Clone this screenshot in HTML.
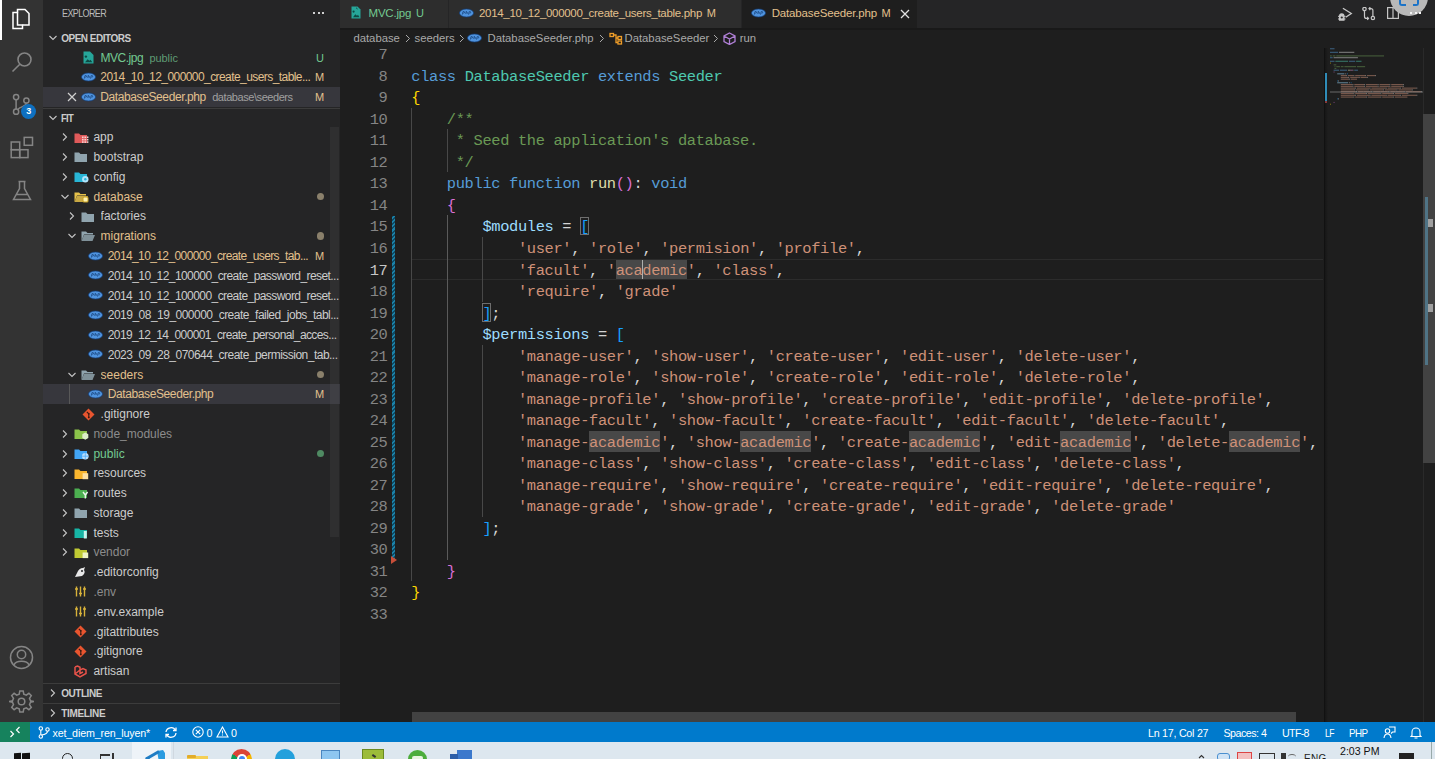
<!DOCTYPE html><html><head><meta charset="utf-8"><title>VS Code</title><style>
*{margin:0;padding:0;box-sizing:border-box}
html,body{width:1435px;height:759px;overflow:hidden;background:#1e1e1e;font-family:"Liberation Sans",sans-serif;position:relative}
.a{position:absolute}
.nw{white-space:pre}
#act{left:0;top:0;width:43px;height:722px;background:#333333}
#side{left:43px;top:0;width:297px;height:722px;background:#252526;overflow:hidden}
#tabs{left:340px;top:0;width:1095px;height:28px;background:#252526}
#crumbs{left:340px;top:28px;width:1095px;height:20px;background:#1e1e1e}
#ed{left:340px;top:48px;width:1095px;height:674px;background:#1e1e1e;overflow:hidden}
#status{left:0;top:722px;width:1435px;height:19.6px;background:#007acc;color:#fff;font-size:10.3px}
#taskbar{left:0;top:741.6px;width:1435px;height:17.4px;background:#dde7ef;overflow:hidden}
.row{position:absolute;left:0;width:297px;height:19.765px;font-size:12px;line-height:19.765px;color:#cccccc;white-space:pre}
.code{position:absolute;left:71.3px;height:21.52px;line-height:25.5px;font-family:"Liberation Mono",monospace;font-size:15.4px;letter-spacing:-0.35px;white-space:pre;color:#d4d4d4}
.ln{position:absolute;left:0;width:47.5px;text-align:right;height:21.52px;line-height:25.5px;font-family:"Liberation Mono",monospace;font-size:15.4px;letter-spacing:-0.35px;color:#858585}
.k{color:#569cd6}.c{color:#4ec9b0}.f{color:#dcdcaa}.cm{color:#6a9955}.s{color:#ce9178}.v{color:#9cdcfe}
.b1{color:#ffd700}.b2{color:#da70d6}.b3{color:#179fff}
.hl{}
</style></head><body><div id="act" class="a"><div class="a" style="left:0;top:0;width:2px;height:40px;background:#ffffff"></div><svg class="a" style="left:10px;top:7px" width="24" height="24" viewBox="0 0 24 24" fill="none" stroke="#ffffff" stroke-width="1.5"><path d="M7.5 5.5 V2.5 H15 L19 6.5 V18 H12.5"/><path d="M7.5 5.5 H3 V21.5 H12.5 V18 H7.5 Z" /></svg><svg class="a" style="left:10px;top:50px" width="24" height="24" viewBox="0 0 24 24" fill="none" stroke="#858585" stroke-width="1.6"><circle cx="14.5" cy="9.5" r="6.5"/><path d="M9.8 14.2 L2.5 21.5"/></svg><svg class="a" style="left:10px;top:93px" width="24" height="26" viewBox="0 0 24 26" fill="none" stroke="#858585" stroke-width="1.5"><circle cx="6.1" cy="4.1" r="2.6"/><circle cx="6.1" cy="18.7" r="2.6"/><circle cx="16.4" cy="7.5" r="2.6"/><path d="M6.1 6.7 V16.1 M16.4 10.1 C16.4 14 10 13 7.8 16.6"/></svg><div class="a" style="left:21.2px;top:104.2px;width:15px;height:15px;border-radius:50%;background:#0e70c0;color:#fff;font-size:9px;line-height:15px;text-align:center;font-weight:bold">3</div><svg class="a" style="left:9px;top:136px" width="26" height="24" viewBox="0 0 26 24" fill="none" stroke="#858585" stroke-width="1.5"><rect x="2.2" y="6" width="8.5" height="7.7"/><rect x="2.2" y="13.7" width="8.5" height="7.9"/><rect x="10.7" y="13.7" width="8.3" height="7.9"/><rect x="15.2" y="1.4" width="8.3" height="7.9"/></svg><svg class="a" style="left:10px;top:179px" width="24" height="24" viewBox="0 0 24 24" fill="none" stroke="#858585" stroke-width="1.5"><path d="M8.5 2.5 H15.5 M9.5 2.5 V9.5 L3.5 20.5 H20.5 L14.5 9.5 V2.5 M6 15.5 H18"/></svg><svg class="a" style="left:9px;top:645px" width="25" height="25" viewBox="0 0 25 25" fill="none" stroke="#858585" stroke-width="1.5"><circle cx="12.5" cy="12.5" r="11"/><circle cx="12.5" cy="9.5" r="4.2"/><path d="M5 20 C7 15 18 15 20 20"/></svg><svg class="a" style="left:9px;top:689px" width="25" height="25" viewBox="0 0 25 25" fill="none" stroke="#858585" stroke-width="1.5"><circle cx="12.5" cy="12.5" r="3.3"/><path d="M10.8 2 H14.2 L14.8 5.1 L17.3 6.1 L19.9 4.3 L22.3 6.7 L20.5 9.3 L21.5 11.8 L24.3 12.4 V12.6 L21.5 13.2 L20.5 15.7 L22.3 18.3 L19.9 20.7 L17.3 18.9 L14.8 19.9 L14.2 23 H10.8 L10.2 19.9 L7.7 18.9 L5.1 20.7 L2.7 18.3 L4.5 15.7 L3.5 13.2 L0.7 12.6 V12.4 L3.5 11.8 L4.5 9.3 L2.7 6.7 L5.1 4.3 L7.7 6.1 L10.2 5.1 Z"/></svg></div><div id="side" class="a"><div class="a nw" style="left:18.5px;top:6px;font-size:10.5px;line-height:14px;color:#bbbbbb;letter-spacing:-0.700px;transform:scaleX(0.8530);transform-origin:0 0;">EXPLORER</div><div class="a" style="left:270.1px;top:12px;width:2px;height:2px;background:#d0d0d0"></div><div class="a" style="left:274.6px;top:12px;width:2px;height:2px;background:#d0d0d0"></div><div class="a" style="left:279.2px;top:12px;width:2px;height:2px;background:#d0d0d0"></div><svg class="a" style="left:4.5px;top:32.7px" width="10" height="10" viewBox="0 0 10 10"><path d="M1.5 3 L5 6.5 L8.5 3" stroke="#c5c5c5" stroke-width="1.1" fill="none"/></svg><div class="a nw" style="left:18.200000000000003px;top:28.80px;height:19.765px;line-height:19.765px;font-size:10px;font-weight:bold;color:#cccccc;letter-spacing:-0.490px;">OPEN EDITORS</div><div class="a" style="left:0;top:87.10px;width:297px;height:19.765px;background:#37373d"></div><svg class="a" style="left:39.5px;top:51.2px" width="11" height="13" viewBox="0 0 11 13"><path d="M0.5 0.5 H7 L10.5 4 V12.5 H0.5 Z" fill="#26a69a"/><circle cx="2.9" cy="5.6" r="1.2" fill="#0d4a44"/><path d="M2 11.3 L4.6 8.2 L6.4 9.8 L7.5 8.8 L9.3 11.3 Z" fill="#0d4a44"/></svg><div class="a nw" style="left:57.4px;top:48.57px;height:19.765px;line-height:19.765px;font-size:12px;color:#73c991;letter-spacing:-0.469px;">MVC.jpg</div><div class="a nw" style="left:106.4px;top:48.57px;height:19.765px;line-height:19.765px;font-size:11px;color:#5f9c74;letter-spacing:-0.048px;">public</div><div class="a nw" style="left:273.0px;top:48.57px;height:19.765px;line-height:19.765px;font-size:11px;color:#73c991;font-weight:normal;">U</div><svg class="a" style="left:37.5px;top:71.8px" width="15" height="10" viewBox="0 0 15 10"><ellipse cx="7.5" cy="5" rx="7.1" ry="4.0" fill="#4f93de" stroke="#123e78" stroke-width="0.7"/><path d="M3.3 6.6 L4 3.6 H5.1 Q5.9 3.8 5.5 4.7 Q5.2 5.2 4.3 5.2 M6.7 5.9 L7.4 3 M7.1 4.2 Q8 3.8 8.4 4.5 L8.1 5.9 M9.5 6.6 L10.2 3.6 H11.3 Q12.1 3.8 11.7 4.7 Q11.4 5.2 10.5 5.2" stroke="#15427a" stroke-width="0.75" fill="none"/></svg><div class="a nw" style="left:57.3px;top:68.33px;height:19.765px;line-height:19.765px;font-size:12px;color:#e2c08d;letter-spacing:-0.571px;">2014_10_12_000000_create_users_table...</div><div class="a nw" style="left:272.0px;top:68.33px;height:19.765px;line-height:19.765px;font-size:11px;color:#e2c08d;font-weight:normal;">M</div><svg class="a" style="left:23.5px;top:92.1px" width="10" height="10" viewBox="0 0 10 10"><path d="M1 1 L9 9 M9 1 L1 9" stroke="#d0d0d0" stroke-width="1.2"/></svg><svg class="a" style="left:37.5px;top:91.6px" width="15" height="10" viewBox="0 0 15 10"><ellipse cx="7.5" cy="5" rx="7.1" ry="4.0" fill="#4f93de" stroke="#123e78" stroke-width="0.7"/><path d="M3.3 6.6 L4 3.6 H5.1 Q5.9 3.8 5.5 4.7 Q5.2 5.2 4.3 5.2 M6.7 5.9 L7.4 3 M7.1 4.2 Q8 3.8 8.4 4.5 L8.1 5.9 M9.5 6.6 L10.2 3.6 H11.3 Q12.1 3.8 11.7 4.7 Q11.4 5.2 10.5 5.2" stroke="#15427a" stroke-width="0.75" fill="none"/></svg><div class="a nw" style="left:57.3px;top:88.10px;height:19.765px;line-height:19.765px;font-size:12px;color:#e2c08d;letter-spacing:-0.398px;">DatabaseSeeder.php</div><div class="a nw" style="left:169.2px;top:88.10px;height:19.765px;line-height:19.765px;font-size:11px;color:#a0a0a0;letter-spacing:-0.437px;">database\seeders</div><div class="a nw" style="left:272.0px;top:88.10px;height:19.765px;line-height:19.765px;font-size:11px;color:#e2c08d;font-weight:normal;">M</div><div class="a" style="left:0;top:107.66px;width:297px;height:1px;background:#3c3c3c"></div><svg class="a" style="left:4.5px;top:112.6px" width="10" height="10" viewBox="0 0 10 10"><path d="M1.5 3 L5 6.5 L8.5 3" stroke="#c5c5c5" stroke-width="1.1" fill="none"/></svg><div class="a nw" style="left:18.200000000000003px;top:108.66px;height:19.765px;line-height:19.765px;font-size:10px;font-weight:bold;color:#cccccc;letter-spacing:-0.700px;transform:scaleX(0.9415);transform-origin:0 0;">FIT</div><svg class="a" style="left:16.5px;top:132.3px" width="10" height="10" viewBox="0 0 10 10"><path d="M3 1.5 L6.5 5 L3 8.5" stroke="#c5c5c5" stroke-width="1.1" fill="none"/></svg><svg class="a" style="left:30.9px;top:131.6px" width="15" height="12" viewBox="0 0 15 12"><path d="M0.5 1.5 H5 L6.5 3 H13 V11 H0.5 Z" fill="#e05a5a"/><g fill="#f7d0d0"><rect x="8" y="4.5" width="1.6" height="1.6"/><rect x="10.4" y="4.5" width="1.6" height="1.6"/><rect x="12.8" y="4.5" width="1.6" height="1.6"/><rect x="8" y="6.9" width="1.6" height="1.6"/><rect x="10.4" y="6.9" width="1.6" height="1.6"/><rect x="12.8" y="6.9" width="1.6" height="1.6"/><rect x="8" y="9.3" width="1.6" height="1.6"/><rect x="10.4" y="9.3" width="1.6" height="1.6"/><rect x="12.8" y="9.3" width="1.6" height="1.6"/></g></svg><div class="a nw" style="left:50.4px;top:128.43px;height:19.765px;line-height:19.765px;font-size:12px;color:#cccccc;width:245.6px;overflow:hidden;text-overflow:ellipsis;">app</div><svg class="a" style="left:16.5px;top:152.1px" width="10" height="10" viewBox="0 0 10 10"><path d="M3 1.5 L6.5 5 L3 8.5" stroke="#c5c5c5" stroke-width="1.1" fill="none"/></svg><svg class="a" style="left:30.9px;top:151.4px" width="15" height="12" viewBox="0 0 15 12"><path d="M0.5 1.5 H5 L6.5 3 H13 V11 H0.5 Z" fill="#90a4ae"/></svg><div class="a nw" style="left:50.4px;top:148.19px;height:19.765px;line-height:19.765px;font-size:12px;color:#cccccc;width:245.6px;overflow:hidden;text-overflow:ellipsis;">bootstrap</div><svg class="a" style="left:16.5px;top:171.9px" width="10" height="10" viewBox="0 0 10 10"><path d="M3 1.5 L6.5 5 L3 8.5" stroke="#c5c5c5" stroke-width="1.1" fill="none"/></svg><svg class="a" style="left:30.9px;top:171.2px" width="15" height="12" viewBox="0 0 15 12"><path d="M0.5 1.5 H5 L6.5 3 H13 V11 H0.5 Z" fill="#29b6d6"/><circle cx="11.3" cy="8.2" r="3.2" fill="#b3e5fc"/><circle cx="11.3" cy="8.2" r="1.2" fill="#29b6d6"/></svg><div class="a nw" style="left:50.4px;top:167.96px;height:19.765px;line-height:19.765px;font-size:12px;color:#cccccc;width:245.6px;overflow:hidden;text-overflow:ellipsis;">config</div><svg class="a" style="left:16.5px;top:191.6px" width="10" height="10" viewBox="0 0 10 10"><path d="M1.5 3 L5 6.5 L8.5 3" stroke="#c5c5c5" stroke-width="1.1" fill="none"/></svg><svg class="a" style="left:30.9px;top:190.9px" width="15" height="12" viewBox="0 0 15 12"><path d="M0.5 1.5 H5 L6.5 3 H12 V4.5 H3 L0.5 11 Z" fill="#e6c14a"/><path d="M3 5 H14 L11.5 11 H0.5 Z" fill="#e6c14a" opacity="0.85"/><rect x="8.5" y="5.5" width="6" height="6" rx="1.5" fill="#c9a227"/><rect x="9.5" y="6.5" width="4" height="4" rx="1" fill="#fff3b0"/></svg><div class="a nw" style="left:50.4px;top:187.72px;height:19.765px;line-height:19.765px;font-size:12px;color:#e2c08d;width:245.6px;overflow:hidden;text-overflow:ellipsis;">database</div><div class="a" style="left:273.8px;top:192.9px;width:7.4px;height:7.4px;border-radius:50%;background:#8a806b"></div><svg class="a" style="left:23.7px;top:211.4px" width="10" height="10" viewBox="0 0 10 10"><path d="M3 1.5 L6.5 5 L3 8.5" stroke="#c5c5c5" stroke-width="1.1" fill="none"/></svg><svg class="a" style="left:38.1px;top:210.7px" width="15" height="12" viewBox="0 0 15 12"><path d="M0.5 1.5 H5 L6.5 3 H13 V11 H0.5 Z" fill="#90a4ae"/></svg><div class="a nw" style="left:57.6px;top:207.48px;height:19.765px;line-height:19.765px;font-size:12px;color:#cccccc;width:238.4px;overflow:hidden;text-overflow:ellipsis;">factories</div><svg class="a" style="left:23.7px;top:231.2px" width="10" height="10" viewBox="0 0 10 10"><path d="M1.5 3 L5 6.5 L8.5 3" stroke="#c5c5c5" stroke-width="1.1" fill="none"/></svg><svg class="a" style="left:38.1px;top:230.4px" width="15" height="12" viewBox="0 0 15 12"><path d="M0.5 1.5 H5 L6.5 3 H12 V4.5 H3 L0.5 11 Z" fill="#90a4ae"/><path d="M3 5 H14 L11.5 11 H0.5 Z" fill="#90a4ae" opacity="0.85"/></svg><div class="a nw" style="left:57.6px;top:227.25px;height:19.765px;line-height:19.765px;font-size:12px;color:#e2c08d;width:238.4px;overflow:hidden;text-overflow:ellipsis;">migrations</div><div class="a" style="left:273.8px;top:232.4px;width:7.4px;height:7.4px;border-radius:50%;background:#8a806b"></div><svg class="a" style="left:44.8px;top:250.5px" width="15" height="10" viewBox="0 0 15 10"><ellipse cx="7.5" cy="5" rx="7.1" ry="4.0" fill="#4f93de" stroke="#123e78" stroke-width="0.7"/><path d="M3.3 6.6 L4 3.6 H5.1 Q5.9 3.8 5.5 4.7 Q5.2 5.2 4.3 5.2 M6.7 5.9 L7.4 3 M7.1 4.2 Q8 3.8 8.4 4.5 L8.1 5.9 M9.5 6.6 L10.2 3.6 H11.3 Q12.1 3.8 11.7 4.7 Q11.4 5.2 10.5 5.2" stroke="#15427a" stroke-width="0.75" fill="none"/></svg><div class="a nw" style="left:64.8px;top:247.02px;height:19.765px;line-height:19.765px;font-size:12px;color:#e2c08d;width:203.2px;overflow:hidden;text-overflow:ellipsis;letter-spacing:-0.610px;">2014_10_12_000000_create_users_tab...</div><div class="a nw" style="left:272.0px;top:247.02px;height:19.765px;line-height:19.765px;font-size:11px;color:#e2c08d;font-weight:normal;">M</div><svg class="a" style="left:44.8px;top:270.3px" width="15" height="10" viewBox="0 0 15 10"><ellipse cx="7.5" cy="5" rx="7.1" ry="4.0" fill="#4f93de" stroke="#123e78" stroke-width="0.7"/><path d="M3.3 6.6 L4 3.6 H5.1 Q5.9 3.8 5.5 4.7 Q5.2 5.2 4.3 5.2 M6.7 5.9 L7.4 3 M7.1 4.2 Q8 3.8 8.4 4.5 L8.1 5.9 M9.5 6.6 L10.2 3.6 H11.3 Q12.1 3.8 11.7 4.7 Q11.4 5.2 10.5 5.2" stroke="#15427a" stroke-width="0.75" fill="none"/></svg><div class="a nw" style="left:64.8px;top:266.78px;height:19.765px;line-height:19.765px;font-size:12px;color:#cccccc;width:231.2px;overflow:hidden;text-overflow:ellipsis;letter-spacing:-0.572px;">2014_10_12_100000_create_password_reset...</div><svg class="a" style="left:44.8px;top:290.0px" width="15" height="10" viewBox="0 0 15 10"><ellipse cx="7.5" cy="5" rx="7.1" ry="4.0" fill="#4f93de" stroke="#123e78" stroke-width="0.7"/><path d="M3.3 6.6 L4 3.6 H5.1 Q5.9 3.8 5.5 4.7 Q5.2 5.2 4.3 5.2 M6.7 5.9 L7.4 3 M7.1 4.2 Q8 3.8 8.4 4.5 L8.1 5.9 M9.5 6.6 L10.2 3.6 H11.3 Q12.1 3.8 11.7 4.7 Q11.4 5.2 10.5 5.2" stroke="#15427a" stroke-width="0.75" fill="none"/></svg><div class="a nw" style="left:64.8px;top:286.55px;height:19.765px;line-height:19.765px;font-size:12px;color:#cccccc;width:231.2px;overflow:hidden;text-overflow:ellipsis;letter-spacing:-0.572px;">2014_10_12_100000_create_password_reset...</div><svg class="a" style="left:44.8px;top:309.8px" width="15" height="10" viewBox="0 0 15 10"><ellipse cx="7.5" cy="5" rx="7.1" ry="4.0" fill="#4f93de" stroke="#123e78" stroke-width="0.7"/><path d="M3.3 6.6 L4 3.6 H5.1 Q5.9 3.8 5.5 4.7 Q5.2 5.2 4.3 5.2 M6.7 5.9 L7.4 3 M7.1 4.2 Q8 3.8 8.4 4.5 L8.1 5.9 M9.5 6.6 L10.2 3.6 H11.3 Q12.1 3.8 11.7 4.7 Q11.4 5.2 10.5 5.2" stroke="#15427a" stroke-width="0.75" fill="none"/></svg><div class="a nw" style="left:64.8px;top:306.31px;height:19.765px;line-height:19.765px;font-size:12px;color:#cccccc;width:231.2px;overflow:hidden;text-overflow:ellipsis;letter-spacing:-0.515px;">2019_08_19_000000_create_failed_jobs_tabl...</div><svg class="a" style="left:44.8px;top:329.6px" width="15" height="10" viewBox="0 0 15 10"><ellipse cx="7.5" cy="5" rx="7.1" ry="4.0" fill="#4f93de" stroke="#123e78" stroke-width="0.7"/><path d="M3.3 6.6 L4 3.6 H5.1 Q5.9 3.8 5.5 4.7 Q5.2 5.2 4.3 5.2 M6.7 5.9 L7.4 3 M7.1 4.2 Q8 3.8 8.4 4.5 L8.1 5.9 M9.5 6.6 L10.2 3.6 H11.3 Q12.1 3.8 11.7 4.7 Q11.4 5.2 10.5 5.2" stroke="#15427a" stroke-width="0.75" fill="none"/></svg><div class="a nw" style="left:64.8px;top:326.08px;height:19.765px;line-height:19.765px;font-size:12px;color:#cccccc;width:231.2px;overflow:hidden;text-overflow:ellipsis;letter-spacing:-0.610px;">2019_12_14_000001_create_personal_acces...</div><svg class="a" style="left:44.8px;top:349.3px" width="15" height="10" viewBox="0 0 15 10"><ellipse cx="7.5" cy="5" rx="7.1" ry="4.0" fill="#4f93de" stroke="#123e78" stroke-width="0.7"/><path d="M3.3 6.6 L4 3.6 H5.1 Q5.9 3.8 5.5 4.7 Q5.2 5.2 4.3 5.2 M6.7 5.9 L7.4 3 M7.1 4.2 Q8 3.8 8.4 4.5 L8.1 5.9 M9.5 6.6 L10.2 3.6 H11.3 Q12.1 3.8 11.7 4.7 Q11.4 5.2 10.5 5.2" stroke="#15427a" stroke-width="0.75" fill="none"/></svg><div class="a nw" style="left:64.8px;top:345.84px;height:19.765px;line-height:19.765px;font-size:12px;color:#cccccc;width:231.2px;overflow:hidden;text-overflow:ellipsis;letter-spacing:-0.520px;">2023_09_28_070644_create_permission_tab...</div><svg class="a" style="left:23.7px;top:369.5px" width="10" height="10" viewBox="0 0 10 10"><path d="M1.5 3 L5 6.5 L8.5 3" stroke="#c5c5c5" stroke-width="1.1" fill="none"/></svg><svg class="a" style="left:38.1px;top:368.8px" width="15" height="12" viewBox="0 0 15 12"><path d="M0.5 1.5 H5 L6.5 3 H12 V4.5 H3 L0.5 11 Z" fill="#90a4ae"/><path d="M3 5 H14 L11.5 11 H0.5 Z" fill="#90a4ae" opacity="0.85"/></svg><div class="a nw" style="left:57.6px;top:365.61px;height:19.765px;line-height:19.765px;font-size:12px;color:#e2c08d;width:238.4px;overflow:hidden;text-overflow:ellipsis;">seeders</div><div class="a" style="left:273.8px;top:370.8px;width:7.4px;height:7.4px;border-radius:50%;background:#8a806b"></div><div class="a" style="left:0;top:384.37px;width:297px;height:19.765px;background:#37373d"></div><div class="a" style="left:25.5px;top:384.37px;width:1px;height:19.765px;background:#585858"></div><svg class="a" style="left:44.8px;top:388.9px" width="15" height="10" viewBox="0 0 15 10"><ellipse cx="7.5" cy="5" rx="7.1" ry="4.0" fill="#4f93de" stroke="#123e78" stroke-width="0.7"/><path d="M3.3 6.6 L4 3.6 H5.1 Q5.9 3.8 5.5 4.7 Q5.2 5.2 4.3 5.2 M6.7 5.9 L7.4 3 M7.1 4.2 Q8 3.8 8.4 4.5 L8.1 5.9 M9.5 6.6 L10.2 3.6 H11.3 Q12.1 3.8 11.7 4.7 Q11.4 5.2 10.5 5.2" stroke="#15427a" stroke-width="0.75" fill="none"/></svg><div class="a nw" style="left:64.8px;top:385.37px;height:19.765px;line-height:19.765px;font-size:12px;color:#e2c08d;width:203.2px;overflow:hidden;text-overflow:ellipsis;letter-spacing:-0.398px;">DatabaseSeeder.php</div><div class="a nw" style="left:272.0px;top:385.37px;height:19.765px;line-height:19.765px;font-size:11px;color:#e2c08d;font-weight:normal;">M</div><svg class="a" style="left:38.6px;top:407.5px" width="13" height="13" viewBox="0 0 13 13"><path d="M6.5 0.5 L12.5 6.5 L6.5 12.5 L0.5 6.5 Z" fill="#e8552f"/><path d="M4.8 3.8 L6.8 5.8 V9.6" stroke="#3a1a12" stroke-width="1.1" fill="none"/><circle cx="6.8" cy="5.8" r="0.9" fill="#3a1a12"/><circle cx="6.8" cy="9.4" r="0.9" fill="#3a1a12"/></svg><div class="a nw" style="left:57.6px;top:405.14px;height:19.765px;line-height:19.765px;font-size:12px;color:#cccccc;width:238.4px;overflow:hidden;text-overflow:ellipsis;">.gitignore</div><svg class="a" style="left:16.5px;top:428.8px" width="10" height="10" viewBox="0 0 10 10"><path d="M3 1.5 L6.5 5 L3 8.5" stroke="#c5c5c5" stroke-width="1.1" fill="none"/></svg><svg class="a" style="left:30.9px;top:428.1px" width="15" height="12" viewBox="0 0 15 12"><path d="M0.5 1.5 H5 L6.5 3 H13 V11 H0.5 Z" fill="#8bc34a"/><path d="M11.3 4.5 L14.3 6.3 V9.9 L11.3 11.7 L8.3 9.9 V6.3 Z" fill="#dcedc8"/></svg><div class="a nw" style="left:50.4px;top:424.90px;height:19.765px;line-height:19.765px;font-size:12px;color:#8c8c8c;width:245.6px;overflow:hidden;text-overflow:ellipsis;">node_modules</div><svg class="a" style="left:16.5px;top:448.6px" width="10" height="10" viewBox="0 0 10 10"><path d="M3 1.5 L6.5 5 L3 8.5" stroke="#c5c5c5" stroke-width="1.1" fill="none"/></svg><svg class="a" style="left:30.9px;top:447.9px" width="15" height="12" viewBox="0 0 15 12"><path d="M0.5 1.5 H5 L6.5 3 H13 V11 H0.5 Z" fill="#42a5f5"/><circle cx="11.3" cy="8.2" r="3.3" fill="#bbdefb"/><path d="M8 8.2 H14.6 M11.3 5 V11.4" stroke="#42a5f5" stroke-width="0.7"/></svg><div class="a nw" style="left:50.4px;top:444.67px;height:19.765px;line-height:19.765px;font-size:12px;color:#73c991;width:245.6px;overflow:hidden;text-overflow:ellipsis;">public</div><div class="a" style="left:273.8px;top:449.9px;width:7.4px;height:7.4px;border-radius:50%;background:#4f8a62"></div><svg class="a" style="left:16.5px;top:468.3px" width="10" height="10" viewBox="0 0 10 10"><path d="M3 1.5 L6.5 5 L3 8.5" stroke="#c5c5c5" stroke-width="1.1" fill="none"/></svg><svg class="a" style="left:30.9px;top:467.6px" width="15" height="12" viewBox="0 0 15 12"><path d="M0.5 1.5 H5 L6.5 3 H13 V11 H0.5 Z" fill="#f9b52e"/><rect x="8.6" y="5.2" width="5.6" height="6" fill="#ffe0a0"/></svg><div class="a nw" style="left:50.4px;top:464.43px;height:19.765px;line-height:19.765px;font-size:12px;color:#cccccc;width:245.6px;overflow:hidden;text-overflow:ellipsis;">resources</div><svg class="a" style="left:16.5px;top:488.1px" width="10" height="10" viewBox="0 0 10 10"><path d="M3 1.5 L6.5 5 L3 8.5" stroke="#c5c5c5" stroke-width="1.1" fill="none"/></svg><svg class="a" style="left:30.9px;top:487.4px" width="15" height="12" viewBox="0 0 15 12"><path d="M0.5 1.5 H5 L6.5 3 H13 V11 H0.5 Z" fill="#4caf50"/><path d="M9 5 L11.3 8 L13.6 5 M11.3 8 V11.5" stroke="#e8f5e9" stroke-width="1.4" fill="none"/></svg><div class="a nw" style="left:50.4px;top:484.20px;height:19.765px;line-height:19.765px;font-size:12px;color:#cccccc;width:245.6px;overflow:hidden;text-overflow:ellipsis;">routes</div><svg class="a" style="left:16.5px;top:507.9px" width="10" height="10" viewBox="0 0 10 10"><path d="M3 1.5 L6.5 5 L3 8.5" stroke="#c5c5c5" stroke-width="1.1" fill="none"/></svg><svg class="a" style="left:30.9px;top:507.2px" width="15" height="12" viewBox="0 0 15 12"><path d="M0.5 1.5 H5 L6.5 3 H13 V11 H0.5 Z" fill="#90a4ae"/></svg><div class="a nw" style="left:50.4px;top:503.96px;height:19.765px;line-height:19.765px;font-size:12px;color:#cccccc;width:245.6px;overflow:hidden;text-overflow:ellipsis;">storage</div><svg class="a" style="left:16.5px;top:527.6px" width="10" height="10" viewBox="0 0 10 10"><path d="M3 1.5 L6.5 5 L3 8.5" stroke="#c5c5c5" stroke-width="1.1" fill="none"/></svg><svg class="a" style="left:30.9px;top:526.9px" width="15" height="12" viewBox="0 0 15 12"><path d="M0.5 1.5 H5 L6.5 3 H13 V11 H0.5 Z" fill="#17b5a5"/><rect x="9.8" y="4" width="3" height="7.5" fill="#c8f5ee"/></svg><div class="a nw" style="left:50.4px;top:523.73px;height:19.765px;line-height:19.765px;font-size:12px;color:#cccccc;width:245.6px;overflow:hidden;text-overflow:ellipsis;">tests</div><svg class="a" style="left:16.5px;top:547.4px" width="10" height="10" viewBox="0 0 10 10"><path d="M3 1.5 L6.5 5 L3 8.5" stroke="#c5c5c5" stroke-width="1.1" fill="none"/></svg><svg class="a" style="left:30.9px;top:546.7px" width="15" height="12" viewBox="0 0 15 12"><path d="M0.5 1.5 H5 L6.5 3 H13 V11 H0.5 Z" fill="#c0ca33"/><rect x="8.6" y="5.5" width="5.6" height="5.6" fill="#f0f4c3"/></svg><div class="a nw" style="left:50.4px;top:543.49px;height:19.765px;line-height:19.765px;font-size:12px;color:#8c8c8c;width:245.6px;overflow:hidden;text-overflow:ellipsis;">vendor</div><svg class="a" style="left:31.4px;top:565.7px" width="13" height="13" viewBox="0 0 13 13"><path d="M1 11 L3 7 Q5 2 9 2 L11 1 L10 4 Q12 7 8 10 Z" fill="#e8e8e8"/><circle cx="8" cy="5" r="1" fill="#252526"/></svg><div class="a nw" style="left:50.4px;top:563.25px;height:19.765px;line-height:19.765px;font-size:12px;color:#cccccc;width:245.6px;overflow:hidden;text-overflow:ellipsis;">.editorconfig</div><svg class="a" style="left:32.4px;top:585.9px" width="11" height="11" viewBox="0 0 11 11" stroke="#d8b23a" stroke-width="1.4" fill="none"><path d="M1.5 0.5 V10.5 M5.5 0.5 V10.5 M9.5 0.5 V10.5 M0 3 H3 M4 7.5 H7 M8 3 H11"/></svg><div class="a nw" style="left:50.4px;top:583.02px;height:19.765px;line-height:19.765px;font-size:12px;color:#8c8c8c;width:245.6px;overflow:hidden;text-overflow:ellipsis;">.env</div><svg class="a" style="left:32.4px;top:605.7px" width="11" height="11" viewBox="0 0 11 11" stroke="#d8b23a" stroke-width="1.4" fill="none"><path d="M1.5 0.5 V10.5 M5.5 0.5 V10.5 M9.5 0.5 V10.5 M0 3 H3 M4 7.5 H7 M8 3 H11"/></svg><div class="a nw" style="left:50.4px;top:602.79px;height:19.765px;line-height:19.765px;font-size:12px;color:#cccccc;width:245.6px;overflow:hidden;text-overflow:ellipsis;">.env.example</div><svg class="a" style="left:31.4px;top:625.0px" width="13" height="13" viewBox="0 0 13 13"><path d="M6.5 0.5 L12.5 6.5 L6.5 12.5 L0.5 6.5 Z" fill="#e8552f"/><path d="M4.8 3.8 L6.8 5.8 V9.6" stroke="#3a1a12" stroke-width="1.1" fill="none"/><circle cx="6.8" cy="5.8" r="0.9" fill="#3a1a12"/><circle cx="6.8" cy="9.4" r="0.9" fill="#3a1a12"/></svg><div class="a nw" style="left:50.4px;top:622.55px;height:19.765px;line-height:19.765px;font-size:12px;color:#cccccc;width:245.6px;overflow:hidden;text-overflow:ellipsis;">.gitattributes</div><svg class="a" style="left:31.4px;top:644.7px" width="13" height="13" viewBox="0 0 13 13"><path d="M6.5 0.5 L12.5 6.5 L6.5 12.5 L0.5 6.5 Z" fill="#e8552f"/><path d="M4.8 3.8 L6.8 5.8 V9.6" stroke="#3a1a12" stroke-width="1.1" fill="none"/><circle cx="6.8" cy="5.8" r="0.9" fill="#3a1a12"/><circle cx="6.8" cy="9.4" r="0.9" fill="#3a1a12"/></svg><div class="a nw" style="left:50.4px;top:642.32px;height:19.765px;line-height:19.765px;font-size:12px;color:#cccccc;width:245.6px;overflow:hidden;text-overflow:ellipsis;">.gitignore</div><svg class="a" style="left:31.4px;top:664.5px" width="13" height="13" viewBox="0 0 13 13" fill="none" stroke="#e8524a" stroke-width="1.5"><path d="M1 2 L1 9 L6 12 L12 8.5 V5 L9 3.5 L6 5 V8.5 L9 7 M1 2 L3.5 1 L6 2.2 V8.5 M1 9 L6 5"/></svg><div class="a nw" style="left:50.4px;top:662.08px;height:19.765px;line-height:19.765px;font-size:12px;color:#cccccc;width:245.6px;overflow:hidden;text-overflow:ellipsis;">artisan</div><div class="a" style="left:287px;top:127px;width:9px;height:410px;background:rgba(121,121,121,0.12)"></div><div class="a" style="left:0;top:683.4px;width:297px;height:1px;background:#3c3c3c"></div><svg class="a" style="left:4.5px;top:688.3px" width="10" height="10" viewBox="0 0 10 10"><path d="M3 1.5 L6.5 5 L3 8.5" stroke="#c5c5c5" stroke-width="1.1" fill="none"/></svg><div class="a nw" style="left:18.200000000000003px;top:684.40px;height:19.765px;line-height:19.765px;font-size:10px;font-weight:bold;color:#cccccc;letter-spacing:-0.448px;">OUTLINE</div><div class="a" style="left:0;top:703.1px;width:297px;height:1px;background:#3c3c3c"></div><svg class="a" style="left:4.5px;top:708.0px" width="10" height="10" viewBox="0 0 10 10"><path d="M3 1.5 L6.5 5 L3 8.5" stroke="#c5c5c5" stroke-width="1.1" fill="none"/></svg><div class="a nw" style="left:18.200000000000003px;top:704.10px;height:19.765px;line-height:19.765px;font-size:10px;font-weight:bold;color:#cccccc;letter-spacing:-0.324px;">TIMELINE</div></div><div id="tabs" class="a"><div class="a" style="left:0;top:0;width:109px;height:28px;background:#2d2d2d"></div><svg class="a" style="left:10.600000000000023px;top:6.2px" width="10" height="13" viewBox="0 0 10 13"><path d="M0.5 0.5 H6.5 L9.5 3.5 V12.5 H0.5 Z" fill="#26a69a"/><circle cx="2.6" cy="5.6" r="1.1" fill="#0d4a44"/><path d="M2 11.3 L4.3 8.3 L6 9.8 L7 8.8 L8.5 11.3 Z" fill="#0d4a44"/><path d="M5 1.8 L6.6 3" stroke="#0d4a44" stroke-width="0.9"/></svg><div class="a nw" style="left:28.5px;top:0;line-height:27px;font-size:11.5px;color:#73c991;letter-spacing:-0.199px;">MVC.jpg</div><div class="a nw" style="left:76px;top:0;line-height:27px;font-size:11px;color:#73c991">U</div><div class="a" style="left:109px;top:0;width:292px;height:28px;background:#2d2d2d"></div><div class="a" style="left:108px;top:0;width:1px;height:28px;background:#252526"></div><svg class="a" style="left:118.5px;top:8.1px" width="15" height="10" viewBox="0 0 15 10"><ellipse cx="7.5" cy="5" rx="7.1" ry="4.0" fill="#4f93de" stroke="#123e78" stroke-width="0.7"/><path d="M3.3 6.6 L4 3.6 H5.1 Q5.9 3.8 5.5 4.7 Q5.2 5.2 4.3 5.2 M6.7 5.9 L7.4 3 M7.1 4.2 Q8 3.8 8.4 4.5 L8.1 5.9 M9.5 6.6 L10.2 3.6 H11.3 Q12.1 3.8 11.7 4.7 Q11.4 5.2 10.5 5.2" stroke="#15427a" stroke-width="0.75" fill="none"/></svg><div class="a nw" style="left:139px;top:0;line-height:27px;font-size:11.5px;color:#e2c08d;letter-spacing:-0.308px;">2014_10_12_000000_create_users_table.php</div><div class="a nw" style="left:366.70000000000005px;top:0;line-height:27px;font-size:11px;color:#e2c08d">M</div><div class="a" style="left:402px;top:0;width:175px;height:28px;background:#1e1e1e"></div><svg class="a" style="left:410.5px;top:8.1px" width="15" height="10" viewBox="0 0 15 10"><ellipse cx="7.5" cy="5" rx="7.1" ry="4.0" fill="#4f93de" stroke="#123e78" stroke-width="0.7"/><path d="M3.3 6.6 L4 3.6 H5.1 Q5.9 3.8 5.5 4.7 Q5.2 5.2 4.3 5.2 M6.7 5.9 L7.4 3 M7.1 4.2 Q8 3.8 8.4 4.5 L8.1 5.9 M9.5 6.6 L10.2 3.6 H11.3 Q12.1 3.8 11.7 4.7 Q11.4 5.2 10.5 5.2" stroke="#15427a" stroke-width="0.75" fill="none"/></svg><div class="a nw" style="left:431.70000000000005px;top:0;line-height:27px;font-size:11.5px;color:#e2c08d;letter-spacing:-0.156px;">DatabaseSeeder.php</div><div class="a nw" style="left:541.5px;top:0;line-height:27px;font-size:11px;color:#e2c08d">M</div><svg class="a" style="left:559.5px;top:9px" width="10" height="10" viewBox="0 0 10 10"><path d="M1 1 L9 9 M9 1 L1 9" stroke="#e0e0e0" stroke-width="1.3"/></svg><svg class="a" style="left:997px;top:7px" width="16" height="14" viewBox="0 0 16 14" fill="none" stroke="#c8c8c8" stroke-width="1.3"><path d="M5.9 1.3 L14.3 6.5 L8.7 10.3"/><path d="M2.6 13 V9.3 Q2.6 7 4.75 7 Q6.9 7 6.9 9.3 V13 Z" fill="#c8c8c8"/><path d="M1 9.3 H2.6 M6.9 9.3 H8.5 M1 12 H2.6 M6.9 12 H8.5" stroke-width="1"/><circle cx="4.75" cy="10.5" r="1.1" fill="#252526" stroke="none"/></svg><svg class="a" style="left:1022px;top:7px" width="14" height="14" viewBox="0 0 14 14" fill="none" stroke="#c8c8c8" stroke-width="1.2"><circle cx="2.5" cy="2" r="1.7"/><circle cx="10.9" cy="11" r="1.7"/><path d="M2.5 3.7 V9.4 Q2.5 11.4 4.5 11.4 H6.4 M5.2 10 L6.5 11.4 L5.2 12.8 M10.9 9.3 V3.6 Q10.9 1.6 8.9 1.6 H7.1 M8.3 0.2 L7 1.6 L8.3 3"/></svg><svg class="a" style="left:1046.5px;top:7px" width="12" height="12" viewBox="0 0 12 12" fill="none" stroke="#c5c5c5" stroke-width="1.2"><rect x="0.6" y="0.6" width="10.8" height="10.8"/><path d="M6 0.6 V11.4"/></svg><div class="a" style="left:1049.7px;top:-23px;width:38.6px;height:38.6px;border-radius:50%;background:#b9b9b9"></div><div class="a" style="left:1059px;top:-6px;width:20px;height:12px;border:2px solid #1a73c8;border-top:none;border-radius:0 0 3px 3px"></div><div class="a" style="left:1065.5px;top:4px;width:7px;height:4px;background:#b9b9b9"></div><div class="a" style="left:1069.8px;top:12px;width:2px;height:2px;background:#f4f4f4"></div><div class="a" style="left:1074.5px;top:12px;width:2px;height:2px;background:#f4f4f4"></div><div class="a" style="left:1079.0px;top:12px;width:2px;height:2px;background:#f4f4f4"></div></div><div id="crumbs" class="a"><div style="position:absolute;top:0;line-height:20px;font-size:11.3px;color:#a9a9a9;white-space:pre;left:13.399999999999977px">database</div><svg class="a" style="left:63.5px;top:5.5px" width="8" height="9" viewBox="0 0 8 9"><path d="M2 1 L5.5 4.5 L2 8" stroke="#a9a9a9" stroke-width="1" fill="none"/></svg><div style="position:absolute;top:0;line-height:20px;font-size:11.3px;color:#a9a9a9;white-space:pre;left:74.5px">seeders</div><svg class="a" style="left:117.5px;top:5.5px" width="8" height="9" viewBox="0 0 8 9"><path d="M2 1 L5.5 4.5 L2 8" stroke="#a9a9a9" stroke-width="1" fill="none"/></svg><svg class="a" style="left:127.0px;top:4.8px" width="15" height="10" viewBox="0 0 15 10"><ellipse cx="7.5" cy="5" rx="7.1" ry="4.0" fill="#4f93de" stroke="#123e78" stroke-width="0.7"/><path d="M3.3 6.6 L4 3.6 H5.1 Q5.9 3.8 5.5 4.7 Q5.2 5.2 4.3 5.2 M6.7 5.9 L7.4 3 M7.1 4.2 Q8 3.8 8.4 4.5 L8.1 5.9 M9.5 6.6 L10.2 3.6 H11.3 Q12.1 3.8 11.7 4.7 Q11.4 5.2 10.5 5.2" stroke="#15427a" stroke-width="0.75" fill="none"/></svg><div style="position:absolute;top:0;line-height:20px;font-size:11.3px;color:#a9a9a9;white-space:pre;left:147.5px">DatabaseSeeder.php</div><svg class="a" style="left:258px;top:5.5px" width="8" height="9" viewBox="0 0 8 9"><path d="M2 1 L5.5 4.5 L2 8" stroke="#a9a9a9" stroke-width="1" fill="none"/></svg><svg class="a" style="left:269px;top:3.5px" width="14" height="13" viewBox="0 0 14 13" fill="none" stroke="#ee9d28" stroke-width="1.3"><rect x="1" y="1.5" width="3.5" height="3"/><rect x="9" y="4.5" width="3.5" height="3"/><rect x="9" y="9" width="3.5" height="3"/><path d="M4.5 3 H7 V10.5 H9 M7 6 H9"/></svg><div style="position:absolute;top:0;line-height:20px;font-size:11.3px;color:#a9a9a9;white-space:pre;left:284.5px">DatabaseSeeder</div><svg class="a" style="left:372px;top:5.5px" width="8" height="9" viewBox="0 0 8 9"><path d="M2 1 L5.5 4.5 L2 8" stroke="#a9a9a9" stroke-width="1" fill="none"/></svg><svg class="a" style="left:383px;top:3.5px" width="13" height="13" viewBox="0 0 13 13" fill="none" stroke="#b180d7" stroke-width="1.3"><path d="M6.5 1 L12 4 V9.5 L6.5 12.5 L1 9.5 V4 Z M1 4 L6.5 7 L12 4 M6.5 7 V12.5"/></svg><div style="position:absolute;top:0;line-height:20px;font-size:11.3px;color:#a9a9a9;white-space:pre;left:399.79999999999995px">run</div></div><div class="a" style="left:340px;top:28px;width:1095px;height:1.5px;background:#191919"></div><div class="a" style="left:340px;top:48px;width:1095px;height:3px;background:linear-gradient(#141414,rgba(30,30,30,0))"></div><div id="ed" class="a"><div class="a" style="left:275.77px;top:210.92px;width:71.12px;height:20.62px;background:#484848"></div><div class="a" style="left:249.10px;top:383.08px;width:71.12px;height:20.62px;background:#484848"></div><div class="a" style="left:400.23px;top:383.08px;width:71.12px;height:20.62px;background:#484848"></div><div class="a" style="left:569.14px;top:383.08px;width:71.12px;height:20.62px;background:#484848"></div><div class="a" style="left:720.27px;top:383.08px;width:71.12px;height:20.62px;background:#484848"></div><div class="a" style="left:889.18px;top:383.08px;width:71.12px;height:20.62px;background:#484848"></div><div class="a" style="left:71.3px;top:210.52px;width:912.2px;height:21.52px;border-top:1.5px solid #2c2c2c;border-bottom:1.5px solid #2c2c2c"></div><div class="a" style="left:71.3px;top:59.88px;width:1px;height:473.44px;background:#484848"></div><div class="a" style="left:106.9px;top:81.40px;width:1px;height:43.04px;background:#484848"></div><div class="a" style="left:106.9px;top:167.48px;width:1px;height:344.32px;background:#5a5a5a"></div><div class="a" style="left:142.4px;top:189.00px;width:1px;height:64.56px;background:#484848"></div><div class="a" style="left:142.4px;top:296.60px;width:1px;height:172.16px;background:#484848"></div><div class="ln" style="top:-4.68px;color:#858585">7</div><div class="ln" style="top:16.84px;color:#858585">8</div><div class="ln" style="top:38.36px;color:#858585">9</div><div class="ln" style="top:59.88px;color:#858585">10</div><div class="ln" style="top:81.40px;color:#858585">11</div><div class="ln" style="top:102.92px;color:#858585">12</div><div class="ln" style="top:124.44px;color:#858585">13</div><div class="ln" style="top:145.96px;color:#858585">14</div><div class="ln" style="top:167.48px;color:#858585">15</div><div class="ln" style="top:189.00px;color:#858585">16</div><div class="ln" style="top:210.52px;color:#c6c6c6">17</div><div class="ln" style="top:232.04px;color:#858585">18</div><div class="ln" style="top:253.56px;color:#858585">19</div><div class="ln" style="top:275.08px;color:#858585">20</div><div class="ln" style="top:296.60px;color:#858585">21</div><div class="ln" style="top:318.12px;color:#858585">22</div><div class="ln" style="top:339.64px;color:#858585">23</div><div class="ln" style="top:361.16px;color:#858585">24</div><div class="ln" style="top:382.68px;color:#858585">25</div><div class="ln" style="top:404.20px;color:#858585">26</div><div class="ln" style="top:425.72px;color:#858585">27</div><div class="ln" style="top:447.24px;color:#858585">28</div><div class="ln" style="top:468.76px;color:#858585">29</div><div class="ln" style="top:490.28px;color:#858585">30</div><div class="ln" style="top:511.80px;color:#858585">31</div><div class="ln" style="top:533.32px;color:#858585">32</div><div class="ln" style="top:554.84px;color:#858585">33</div><div class="a" style="left:51.80000000000001px;top:167.98px;width:3.6px;height:343.82px;background:repeating-linear-gradient(-45deg,#1b81a8 0 1.5px,#0f4a63 1.5px 3px)"></div><svg class="a" style="left:51px;top:507.80px" width="6" height="8" viewBox="0 0 6 8"><path d="M0 0 L6 4 L0 8 Z" fill="#c74e39"/></svg><div class="code" style="top:-4.68px"></div><div class="code" style="top:16.84px"><span class="k">class</span> <span class="c">DatabaseSeeder</span> <span class="k">extends</span> <span class="c">Seeder</span></div><div class="code" style="top:38.36px"><span class="b1">{</span></div><div class="code" style="top:59.88px">    <span class="cm">/**</span></div><div class="code" style="top:81.40px">    <span class="cm"> * Seed the application's database.</span></div><div class="code" style="top:102.92px">    <span class="cm"> */</span></div><div class="code" style="top:124.44px">    <span class="k">public</span> <span class="k">function</span> <span class="f">run</span><span class="b2">()</span>: <span class="k">void</span></div><div class="code" style="top:145.96px">    <span class="b2">{</span></div><div class="code" style="top:167.48px">        <span class="v">$modules</span> = <span class="b3">[</span></div><div class="code" style="top:189.00px">            <span class="s">'user'</span>, <span class="s">'role'</span>, <span class="s">'permision'</span>, <span class="s">'profile'</span>,</div><div class="code" style="top:210.52px">            <span class="s">'facult'</span>, <span class="s">'</span><span class="s hl">academic</span><span class="s">'</span>, <span class="s">'class'</span>,</div><div class="code" style="top:232.04px">            <span class="s">'require'</span>, <span class="s">'grade'</span></div><div class="code" style="top:253.56px">        <span class="b3">]</span>;</div><div class="code" style="top:275.08px">        <span class="v">$permissions</span> = <span class="b3">[</span></div><div class="code" style="top:468.76px">        <span class="b3">]</span>;</div><div class="code" style="top:490.28px"></div><div class="code" style="top:511.80px">    <span class="b2">}</span></div><div class="code" style="top:533.32px"><span class="b1">}</span></div><div class="code" style="top:554.84px"></div><div class="code" style="top:296.60px">            <span class="s">'manage-user'</span>, <span class="s">'show-user'</span>, <span class="s">'create-user'</span>, <span class="s">'edit-user'</span>, <span class="s">'delete-user'</span>,</div><div class="code" style="top:318.12px">            <span class="s">'manage-role'</span>, <span class="s">'show-role'</span>, <span class="s">'create-role'</span>, <span class="s">'edit-role'</span>, <span class="s">'delete-role'</span>,</div><div class="code" style="top:339.64px">            <span class="s">'manage-profile'</span>, <span class="s">'show-profile'</span>, <span class="s">'create-profile'</span>, <span class="s">'edit-profile'</span>, <span class="s">'delete-profile'</span>,</div><div class="code" style="top:361.16px">            <span class="s">'manage-facult'</span>, <span class="s">'show-facult'</span>, <span class="s">'create-facult'</span>, <span class="s">'edit-facult'</span>, <span class="s">'delete-facult'</span>,</div><div class="code" style="top:382.68px">            <span class="s">'manage-</span><span class="s hl">academic</span><span class="s">'</span>, <span class="s">'show-</span><span class="s hl">academic</span><span class="s">'</span>, <span class="s">'create-</span><span class="s hl">academic</span><span class="s">'</span>, <span class="s">'edit-</span><span class="s hl">academic</span><span class="s">'</span>, <span class="s">'delete-</span><span class="s hl">academic</span><span class="s">'</span>,</div><div class="code" style="top:404.20px">            <span class="s">'manage-class'</span>, <span class="s">'show-class'</span>, <span class="s">'create-class'</span>, <span class="s">'edit-class'</span>, <span class="s">'delete-class'</span>,</div><div class="code" style="top:425.72px">            <span class="s">'manage-require'</span>, <span class="s">'show-require'</span>, <span class="s">'create-require'</span>, <span class="s">'edit-require'</span>, <span class="s">'delete-require'</span>,</div><div class="code" style="top:447.24px">            <span class="s">'manage-grade'</span>, <span class="s">'show-grade'</span>, <span class="s">'create-grade'</span>, <span class="s">'edit-grade'</span>, <span class="s">'delete-grade'</span></div><div class="a" style="left:240.2px;top:168.98px;width:8.89px;height:18.52px;border:1px solid #6e6e6e"></div><div class="a" style="left:142.4px;top:255.06px;width:8.89px;height:18.52px;border:1px solid #6e6e6e"></div><div class="a" style="left:301.9px;top:211.52px;width:1.6px;height:19.52px;background:#aeafad"></div><div class="a" style="left:983.5px;top:0;width:1px;height:674px;background:#111"></div><div class="a" style="left:984.5px;top:0;width:3px;height:674px;background:linear-gradient(90deg,#161616,rgba(30,30,30,0))"></div><svg class="a" style="left:990.4px;top:0.0px;opacity:0.5" width="95" height="62" viewBox="0 0 95 62"><rect x="0.00" y="0.20" width="4.50" height="1.1" fill="#569cd6"/><rect x="0.00" y="3.78" width="8.10" height="1.1" fill="#569cd6"/><rect x="9.00" y="3.78" width="15.30" height="1.1" fill="#d4d4d4"/><rect x="0.00" y="7.36" width="1.80" height="1.1" fill="#6a9955"/><rect x="2.70" y="7.36" width="2.70" height="1.1" fill="#6a9955"/><rect x="6.30" y="7.36" width="47.70" height="1.1" fill="#6a9955"/><rect x="0.00" y="9.15" width="2.70" height="1.1" fill="#569cd6"/><rect x="3.60" y="9.15" width="24.30" height="1.1" fill="#d4d4d4"/><rect x="0.00" y="12.73" width="4.50" height="1.1" fill="#569cd6"/><rect x="5.40" y="12.73" width="12.60" height="1.1" fill="#4ec9b0"/><rect x="18.90" y="12.73" width="6.30" height="1.1" fill="#569cd6"/><rect x="26.10" y="12.73" width="5.40" height="1.1" fill="#4ec9b0"/><rect x="0.00" y="14.52" width="0.90" height="1.1" fill="#ffd700"/><rect x="3.60" y="16.31" width="2.70" height="1.1" fill="#6a9955"/><rect x="4.50" y="18.10" width="0.90" height="1.1" fill="#6a9955"/><rect x="6.30" y="18.10" width="3.60" height="1.1" fill="#6a9955"/><rect x="10.80" y="18.10" width="2.70" height="1.1" fill="#6a9955"/><rect x="14.40" y="18.10" width="11.70" height="1.1" fill="#6a9955"/><rect x="27.00" y="18.10" width="8.10" height="1.1" fill="#6a9955"/><rect x="4.50" y="19.89" width="1.80" height="1.1" fill="#6a9955"/><rect x="3.60" y="21.68" width="5.40" height="1.1" fill="#569cd6"/><rect x="9.90" y="21.68" width="7.20" height="1.1" fill="#569cd6"/><rect x="18.00" y="21.68" width="2.70" height="1.1" fill="#dcdcaa"/><rect x="20.70" y="21.68" width="1.80" height="1.1" fill="#da70d6"/><rect x="22.50" y="21.68" width="0.90" height="1.1" fill="#d4d4d4"/><rect x="24.30" y="21.68" width="3.60" height="1.1" fill="#569cd6"/><rect x="3.60" y="23.47" width="0.90" height="1.1" fill="#da70d6"/><rect x="7.20" y="25.26" width="7.20" height="1.1" fill="#9cdcfe"/><rect x="15.30" y="25.26" width="0.90" height="1.1" fill="#d4d4d4"/><rect x="17.10" y="25.26" width="0.90" height="1.1" fill="#179fff"/><rect x="10.80" y="27.05" width="5.40" height="1.1" fill="#ce9178"/><rect x="16.20" y="27.05" width="0.90" height="1.1" fill="#d4d4d4"/><rect x="18.00" y="27.05" width="5.40" height="1.1" fill="#ce9178"/><rect x="23.40" y="27.05" width="0.90" height="1.1" fill="#d4d4d4"/><rect x="25.20" y="27.05" width="9.90" height="1.1" fill="#ce9178"/><rect x="35.10" y="27.05" width="0.90" height="1.1" fill="#d4d4d4"/><rect x="36.90" y="27.05" width="8.10" height="1.1" fill="#ce9178"/><rect x="45.00" y="27.05" width="0.90" height="1.1" fill="#d4d4d4"/><rect x="10.80" y="28.84" width="7.20" height="1.1" fill="#ce9178"/><rect x="18.00" y="28.84" width="0.90" height="1.1" fill="#d4d4d4"/><rect x="19.80" y="28.84" width="0.90" height="1.1" fill="#ce9178"/><rect x="20.70" y="28.84" width="7.20" height="1.1" fill="#ce9178"/><rect x="27.90" y="28.84" width="0.90" height="1.1" fill="#ce9178"/><rect x="28.80" y="28.84" width="0.90" height="1.1" fill="#d4d4d4"/><rect x="30.60" y="28.84" width="6.30" height="1.1" fill="#ce9178"/><rect x="36.90" y="28.84" width="0.90" height="1.1" fill="#d4d4d4"/><rect x="10.80" y="30.63" width="8.10" height="1.1" fill="#ce9178"/><rect x="18.90" y="30.63" width="0.90" height="1.1" fill="#d4d4d4"/><rect x="20.70" y="30.63" width="6.30" height="1.1" fill="#ce9178"/><rect x="7.20" y="32.42" width="0.90" height="1.1" fill="#179fff"/><rect x="8.10" y="32.42" width="0.90" height="1.1" fill="#d4d4d4"/><rect x="7.20" y="34.21" width="10.80" height="1.1" fill="#9cdcfe"/><rect x="18.90" y="34.21" width="0.90" height="1.1" fill="#d4d4d4"/><rect x="20.70" y="34.21" width="0.90" height="1.1" fill="#179fff"/><rect x="7.20" y="50.32" width="0.90" height="1.1" fill="#179fff"/><rect x="8.10" y="50.32" width="0.90" height="1.1" fill="#d4d4d4"/><rect x="3.60" y="53.90" width="0.90" height="1.1" fill="#da70d6"/><rect x="0.00" y="55.69" width="0.90" height="1.1" fill="#ffd700"/><rect x="10.80" y="36.00" width="11.70" height="1.1" fill="#ce9178"/><rect x="22.50" y="36.00" width="0.90" height="1.1" fill="#d4d4d4"/><rect x="24.30" y="36.00" width="9.90" height="1.1" fill="#ce9178"/><rect x="34.20" y="36.00" width="0.90" height="1.1" fill="#d4d4d4"/><rect x="36.00" y="36.00" width="11.70" height="1.1" fill="#ce9178"/><rect x="47.70" y="36.00" width="0.90" height="1.1" fill="#d4d4d4"/><rect x="49.50" y="36.00" width="9.90" height="1.1" fill="#ce9178"/><rect x="59.40" y="36.00" width="0.90" height="1.1" fill="#d4d4d4"/><rect x="61.20" y="36.00" width="11.70" height="1.1" fill="#ce9178"/><rect x="72.90" y="36.00" width="0.90" height="1.1" fill="#d4d4d4"/><rect x="10.80" y="37.79" width="11.70" height="1.1" fill="#ce9178"/><rect x="22.50" y="37.79" width="0.90" height="1.1" fill="#d4d4d4"/><rect x="24.30" y="37.79" width="9.90" height="1.1" fill="#ce9178"/><rect x="34.20" y="37.79" width="0.90" height="1.1" fill="#d4d4d4"/><rect x="36.00" y="37.79" width="11.70" height="1.1" fill="#ce9178"/><rect x="47.70" y="37.79" width="0.90" height="1.1" fill="#d4d4d4"/><rect x="49.50" y="37.79" width="9.90" height="1.1" fill="#ce9178"/><rect x="59.40" y="37.79" width="0.90" height="1.1" fill="#d4d4d4"/><rect x="61.20" y="37.79" width="11.70" height="1.1" fill="#ce9178"/><rect x="72.90" y="37.79" width="0.90" height="1.1" fill="#d4d4d4"/><rect x="10.80" y="39.58" width="14.40" height="1.1" fill="#ce9178"/><rect x="25.20" y="39.58" width="0.90" height="1.1" fill="#d4d4d4"/><rect x="27.00" y="39.58" width="12.60" height="1.1" fill="#ce9178"/><rect x="39.60" y="39.58" width="0.90" height="1.1" fill="#d4d4d4"/><rect x="41.40" y="39.58" width="14.40" height="1.1" fill="#ce9178"/><rect x="55.80" y="39.58" width="0.90" height="1.1" fill="#d4d4d4"/><rect x="57.60" y="39.58" width="12.60" height="1.1" fill="#ce9178"/><rect x="70.20" y="39.58" width="0.90" height="1.1" fill="#d4d4d4"/><rect x="72.00" y="39.58" width="14.40" height="1.1" fill="#ce9178"/><rect x="86.40" y="39.58" width="0.90" height="1.1" fill="#d4d4d4"/><rect x="10.80" y="41.37" width="13.50" height="1.1" fill="#ce9178"/><rect x="24.30" y="41.37" width="0.90" height="1.1" fill="#d4d4d4"/><rect x="26.10" y="41.37" width="11.70" height="1.1" fill="#ce9178"/><rect x="37.80" y="41.37" width="0.90" height="1.1" fill="#d4d4d4"/><rect x="39.60" y="41.37" width="13.50" height="1.1" fill="#ce9178"/><rect x="53.10" y="41.37" width="0.90" height="1.1" fill="#d4d4d4"/><rect x="54.90" y="41.37" width="11.70" height="1.1" fill="#ce9178"/><rect x="66.60" y="41.37" width="0.90" height="1.1" fill="#d4d4d4"/><rect x="68.40" y="41.37" width="13.50" height="1.1" fill="#ce9178"/><rect x="81.90" y="41.37" width="0.90" height="1.1" fill="#d4d4d4"/><rect x="10.80" y="43.16" width="7.20" height="1.1" fill="#ce9178"/><rect x="18.00" y="43.16" width="7.20" height="1.1" fill="#ce9178"/><rect x="25.20" y="43.16" width="0.90" height="1.1" fill="#ce9178"/><rect x="26.10" y="43.16" width="0.90" height="1.1" fill="#d4d4d4"/><rect x="27.90" y="43.16" width="5.40" height="1.1" fill="#ce9178"/><rect x="33.30" y="43.16" width="7.20" height="1.1" fill="#ce9178"/><rect x="40.50" y="43.16" width="0.90" height="1.1" fill="#ce9178"/><rect x="41.40" y="43.16" width="0.90" height="1.1" fill="#d4d4d4"/><rect x="43.20" y="43.16" width="7.20" height="1.1" fill="#ce9178"/><rect x="50.40" y="43.16" width="7.20" height="1.1" fill="#ce9178"/><rect x="57.60" y="43.16" width="0.90" height="1.1" fill="#ce9178"/><rect x="58.50" y="43.16" width="0.90" height="1.1" fill="#d4d4d4"/><rect x="60.30" y="43.16" width="5.40" height="1.1" fill="#ce9178"/><rect x="65.70" y="43.16" width="7.20" height="1.1" fill="#ce9178"/><rect x="72.90" y="43.16" width="0.90" height="1.1" fill="#ce9178"/><rect x="73.80" y="43.16" width="0.90" height="1.1" fill="#d4d4d4"/><rect x="75.60" y="43.16" width="7.20" height="1.1" fill="#ce9178"/><rect x="82.80" y="43.16" width="7.20" height="1.1" fill="#ce9178"/><rect x="90.00" y="43.16" width="0.90" height="1.1" fill="#ce9178"/><rect x="90.90" y="43.16" width="0.90" height="1.1" fill="#d4d4d4"/><rect x="10.80" y="44.95" width="12.60" height="1.1" fill="#ce9178"/><rect x="23.40" y="44.95" width="0.90" height="1.1" fill="#d4d4d4"/><rect x="25.20" y="44.95" width="10.80" height="1.1" fill="#ce9178"/><rect x="36.00" y="44.95" width="0.90" height="1.1" fill="#d4d4d4"/><rect x="37.80" y="44.95" width="12.60" height="1.1" fill="#ce9178"/><rect x="50.40" y="44.95" width="0.90" height="1.1" fill="#d4d4d4"/><rect x="52.20" y="44.95" width="10.80" height="1.1" fill="#ce9178"/><rect x="63.00" y="44.95" width="0.90" height="1.1" fill="#d4d4d4"/><rect x="64.80" y="44.95" width="12.60" height="1.1" fill="#ce9178"/><rect x="77.40" y="44.95" width="0.90" height="1.1" fill="#d4d4d4"/><rect x="10.80" y="46.74" width="14.40" height="1.1" fill="#ce9178"/><rect x="25.20" y="46.74" width="0.90" height="1.1" fill="#d4d4d4"/><rect x="27.00" y="46.74" width="12.60" height="1.1" fill="#ce9178"/><rect x="39.60" y="46.74" width="0.90" height="1.1" fill="#d4d4d4"/><rect x="41.40" y="46.74" width="14.40" height="1.1" fill="#ce9178"/><rect x="55.80" y="46.74" width="0.90" height="1.1" fill="#d4d4d4"/><rect x="57.60" y="46.74" width="12.60" height="1.1" fill="#ce9178"/><rect x="70.20" y="46.74" width="0.90" height="1.1" fill="#d4d4d4"/><rect x="72.00" y="46.74" width="14.40" height="1.1" fill="#ce9178"/><rect x="86.40" y="46.74" width="0.90" height="1.1" fill="#d4d4d4"/><rect x="10.80" y="48.53" width="12.60" height="1.1" fill="#ce9178"/><rect x="23.40" y="48.53" width="0.90" height="1.1" fill="#d4d4d4"/><rect x="25.20" y="48.53" width="10.80" height="1.1" fill="#ce9178"/><rect x="36.00" y="48.53" width="0.90" height="1.1" fill="#d4d4d4"/><rect x="37.80" y="48.53" width="12.60" height="1.1" fill="#ce9178"/><rect x="50.40" y="48.53" width="0.90" height="1.1" fill="#d4d4d4"/><rect x="52.20" y="48.53" width="10.80" height="1.1" fill="#ce9178"/><rect x="63.00" y="48.53" width="0.90" height="1.1" fill="#d4d4d4"/><rect x="64.80" y="48.53" width="12.60" height="1.1" fill="#ce9178"/></svg><div class="a" style="left:990.4px;top:42.96px;width:92.6px;height:1.6px;background:rgba(200,200,200,0.22)"></div><div class="a" style="left:985.2px;top:24.7px;width:2.2px;height:28.7px;background:#2f8cb8"></div><div class="a" style="left:985px;top:53.4px;width:2.2px;height:1.8px;background:#8a3a3a"></div><div class="a" style="left:1082.5px;top:0;width:12.5px;height:674px;background:#1e1e1e;border-left:1px solid #2a2a2a"></div><div class="a" style="left:1083px;top:66px;width:12px;height:349px;background:#424242"></div><div class="a" style="left:1084.5px;top:148.5px;width:3px;height:168.10000000000002px;background:#4f7385"></div><div class="a" style="left:1087.5px;top:171px;width:5px;height:8px;background:#a0a0a0"></div><div class="a" style="left:1087.5px;top:256px;width:5px;height:8px;background:#a0a0a0"></div><div class="a" style="left:71.5px;top:663.8px;width:884.5px;height:10px;background:#424242"></div></div><div id="status" class="a"><div class="a" style="left:0;top:0;width:30px;height:19.6px;background:#16825d"></div><svg class="a" style="left:9px;top:4px" width="12" height="12" viewBox="0 0 12 12" fill="none" stroke="#ffffff" stroke-width="1.2"><path d="M1.5 5 L4.5 8 L1.5 11 M10.5 1 L7.5 4 L10.5 7"/></svg><svg class="a" style="left:38px;top:3.5px" width="12" height="13" viewBox="0 0 12 13" fill="none" stroke="#ffffff" stroke-width="1.1"><circle cx="2.8" cy="2.5" r="1.7"/><circle cx="2.8" cy="10.5" r="1.7"/><circle cx="9.5" cy="3.5" r="1.7"/><path d="M2.8 4.2 V8.8 M9.5 5.2 Q9.5 8 3.5 9"/></svg><div style="position:absolute;top:0;line-height:22.6px;white-space:pre;color:#ffffff;left:52.5px;font-size:10.7px;letter-spacing:-0.146px;">xet_diem_ren_luyen*</div><svg class="a" style="left:164px;top:3.5px" width="14" height="13" viewBox="0 0 14 13" fill="none" stroke="#ffffff" stroke-width="1.3"><path d="M2 6 A5 4.8 0 0 1 11.5 4.5 M12 7 A5 4.8 0 0 1 2.5 8.5"/><path d="M9 4.5 H12 V1.5 M5 8.5 H2 V11.5"/></svg><svg class="a" style="left:192px;top:4px" width="12" height="12" viewBox="0 0 12 12" fill="none" stroke="#ffffff" stroke-width="1.1"><circle cx="6" cy="6" r="5.2"/><path d="M3.8 3.8 L8.2 8.2 M8.2 3.8 L3.8 8.2"/></svg><div style="position:absolute;top:0;line-height:22.6px;white-space:pre;color:#ffffff;left:206.5px;font-size:10.7px">0</div><svg class="a" style="left:216px;top:3.5px" width="13" height="12" viewBox="0 0 13 12" fill="none" stroke="#ffffff" stroke-width="1.1"><path d="M6.5 1 L12 11 H1 Z M6.5 4.5 V7.5 M6.5 8.6 V9.6"/></svg><div style="position:absolute;top:0;line-height:22.6px;white-space:pre;color:#ffffff;left:231px;font-size:10.7px">0</div><div style="position:absolute;top:0;line-height:22.6px;white-space:pre;color:#ffffff;left:1148px;font-size:10.7px;letter-spacing:-0.254px;">Ln 17, Col 27</div><div style="position:absolute;top:0;line-height:22.6px;white-space:pre;color:#ffffff;left:1223.5px;font-size:10.7px;letter-spacing:-0.511px;">Spaces: 4</div><div style="position:absolute;top:0;line-height:22.6px;white-space:pre;color:#ffffff;left:1282px;font-size:10.7px;letter-spacing:-0.678px;">UTF-8</div><div style="position:absolute;top:0;line-height:22.6px;white-space:pre;color:#ffffff;left:1324.5px;font-size:10.7px;letter-spacing:-0.700px;transform:scaleX(0.8060);transform-origin:0 0;">LF</div><div style="position:absolute;top:0;line-height:22.6px;white-space:pre;color:#ffffff;left:1349px;font-size:10.7px;letter-spacing:-0.700px;transform:scaleX(0.9223);transform-origin:0 0;">PHP</div><svg class="a" style="left:1383px;top:3.5px" width="13" height="13" viewBox="0 0 13 13" fill="none" stroke="#ffffff" stroke-width="1.1"><circle cx="4.5" cy="5" r="2.2"/><path d="M1 12 Q1.5 8 4.5 8 Q7.5 8 8 12 M6 1 H12 V6 H9.5 L8 7.5"/></svg><svg class="a" style="left:1410px;top:3.5px" width="12" height="13" viewBox="0 0 12 13" fill="none" stroke="#ffffff" stroke-width="1.1"><path d="M2 9.5 V6 A4 4 0 0 1 10 6 V9.5 L11 10.5 H1 Z M4.5 12 H7.5"/></svg></div><div id="taskbar" class="a"><div class="a" style="left:14.2px;top:11.8px;width:6.5px;height:7px;background:#111;transform:skewY(-4deg)"></div><div class="a" style="left:21.5px;top:11px;width:7.8px;height:8px;background:#111;transform:skewY(-4deg)"></div><div class="a" style="left:61.5px;top:11.4px;width:11px;height:11px;border:1.6px solid #222;border-radius:50%"></div><div class="a" style="left:100px;top:12px;width:10px;height:6px;border-top:2px solid #333;border-left:1px solid #333"></div><div class="a" style="left:112px;top:11px;width:2px;height:6px;background:#333"></div><div class="a" style="left:132px;top:0;width:38.6px;height:17.4px;background:#eef3f8"></div><svg class="a" style="left:143px;top:8px" width="22" height="12" viewBox="0 0 22 12"><path d="M14 1 L20 0 L22 3 V12 H16 Z" fill="#2b9be0"/><path d="M0 11 L4 7 L12 12 Z" fill="#1f6fb8"/><path d="M3 9 L16 1.5" stroke="#1f7cc4" stroke-width="3"/></svg><div class="a" style="left:173px;top:0;width:1px;height:17.4px;background:#d0d8e0"></div><div class="a" style="left:186.5px;top:14.5px;width:21.5px;height:4px;background:#f4cf55"></div><div class="a" style="left:186.5px;top:13px;width:9px;height:3px;background:#e2ac2a;border-radius:1px"></div><div class="a" style="left:231px;top:7px;width:21px;height:21px;border-radius:50%;background:conic-gradient(from -60deg,#db4437 0 120deg,#f4b400 120deg 240deg,#0f9d58 240deg 360deg)"></div><div class="a" style="left:236.5px;top:12.5px;width:10px;height:10px;border-radius:50%;background:#fff"></div><div class="a" style="left:238.5px;top:14.5px;width:6px;height:6px;border-radius:50%;background:#4285f4"></div><div class="a" style="left:275px;top:7.7px;width:20px;height:12px;border-radius:10px 10px 0 0;background:#23a0dc"></div><div class="a" style="left:320.6px;top:8.6px;width:19.5px;height:10px;background:#8ec6f0;border:1.3px solid #4a86c0;border-bottom:none"></div><div class="a" style="left:362.4px;top:7.2px;width:21.8px;height:11px;background:#9cbc3a;border:1.2px solid #6a8a20;border-bottom:none"></div><div class="a" style="left:372px;top:13px;width:4px;height:2px;background:#333;transform:rotate(35deg)"></div><div class="a" style="left:407.7px;top:8.2px;width:19.3px;height:19.3px;border-radius:50%;background:#4cad3c"></div><div class="a" style="left:412px;top:14px;width:11px;height:4px;background:#e8f4e0;border-radius:2px"></div><div class="a" style="left:457px;top:8.4px;width:15px;height:10px;background:#3b78cc"></div><div class="a" style="left:450.4px;top:12px;width:8px;height:6px;background:#2c5ea8"></div><svg class="a" style="left:1198px;top:12px" width="7" height="5" viewBox="0 0 7 5"><path d="M1 4 L3.5 1.5 L6 4" stroke="#333" stroke-width="1.1" fill="none"/></svg><div class="a" style="left:1217px;top:11.5px;width:13px;height:8px;border:1.5px solid #4a90d0;border-radius:3px;background:#cfe3f5"></div><div class="a" style="left:1237px;top:10.5px;width:15px;height:8px;background:#f3c0c0;border:1px solid #d44"></div><div class="a" style="left:1258.6px;top:11px;width:16px;height:8px;border:1.8px solid #333;border-bottom:none"></div><div class="a" style="left:1281px;top:11.5px;width:5px;height:6px;background:#333"></div><div class="a" style="left:1288px;top:12px;width:8px;height:6px;border-top:1px solid #666;border-radius:50% 50% 0 0"></div><div class="a nw" style="left:1304px;top:12.5px;font-size:10px;line-height:10px;color:#222;letter-spacing:0.3px">ENG</div><div class="a nw" style="left:1340px;top:2px;font-size:10.6px;line-height:14px;color:#111">2:03 PM</div><div class="a" style="left:1399px;top:11.7px;width:15px;height:6px;background:#222"></div><div class="a" style="left:1431px;top:0;width:1px;height:17.4px;background:#9aa"></div></div></body></html>
